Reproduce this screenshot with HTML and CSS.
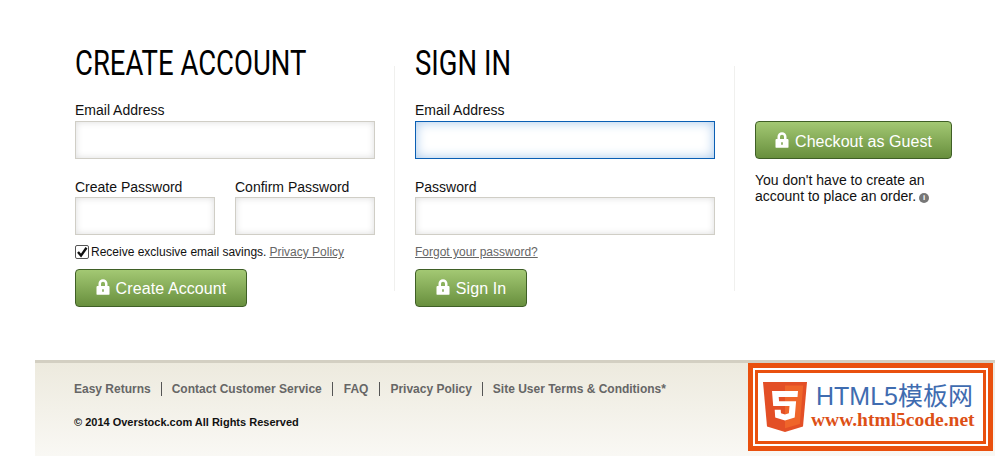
FILE: index.html
```html
<!DOCTYPE html>
<html>
<head>
    <meta charset="utf-8">
    <title>Sign In</title>
    <link rel="stylesheet" href="styles.css">
</head>
<body>
<div class="page">
    <div class="columns">
        <div class="col col-create">
            <h1><span>CREATE ACCOUNT</span></h1>
            <label class="label" for="new-email">Email Address</label>
            <input class="field" id="new-email" type="text">
            <div class="pair">
                <div class="pair-item">
                    <label class="label" for="new-pass">Create Password</label>
                    <input class="field" id="new-pass" type="password">
                </div>
                <div class="pair-item">
                    <label class="label" for="confirm-pass">Confirm Password</label>
                    <input class="field" id="confirm-pass" type="password">
                </div>
            </div>
            <div class="savings">
                <span class="check">
                    <svg viewBox="0 0 14 14" width="14" height="14"><path d="M3 7l3 3.6L11.5 2.8" fill="none" stroke="#111" stroke-width="2.4"/></svg>
                </span>
                <span>Receive exclusive email savings.</span>
                <a href="#" class="small-link">Privacy Policy</a>
            </div>
            <a href="#" class="btn btn-create">
                <svg class="lock" viewBox="0 0 14 16" width="14" height="16"><path fill="#fff" fill-rule="evenodd" d="M2.500 7V4.800a4.500 4.500 0 0 1 9 0V7h1.100c.5 0 .9.4.9.900v7c0 .5-.4.9-.9.9H1.400c-.5 0-.9-.4-.9-.9v-7c0-.5.4-.9.9-.9zM5 7h4V4.800a2 2 0 0 0-4 0zM6.200 10.200v2.600h1.600v-2.600z"/></svg>
                Create Account
            </a>
        </div>
        <div class="col col-signin">
            <h1><span>SIGN IN</span></h1>
            <label class="label" for="email">Email Address</label>
            <input class="field field-focus" id="email" type="text">
            <label class="label label-pass" for="pass">Password</label>
            <input class="field" id="pass" type="password">
            <a href="#" class="small-link forgot">Forgot your password?</a>
            <a href="#" class="btn btn-signin">
                <svg class="lock" viewBox="0 0 14 16" width="14" height="16"><path fill="#fff" fill-rule="evenodd" d="M2.500 7V4.800a4.500 4.500 0 0 1 9 0V7h1.100c.5 0 .9.4.9.900v7c0 .5-.4.9-.9.9H1.400c-.5 0-.9-.4-.9-.9v-7c0-.5.4-.9.9-.9zM5 7h4V4.800a2 2 0 0 0-4 0zM6.200 10.200v2.600h1.600v-2.600z"/></svg>
                Sign In
            </a>
        </div>
        <div class="col col-guest">
            <a href="#" class="btn btn-guest">
                <svg class="lock" viewBox="0 0 14 16" width="14" height="16"><path fill="#fff" fill-rule="evenodd" d="M2.500 7V4.800a4.500 4.500 0 0 1 9 0V7h1.100c.5 0 .9.4.9.900v7c0 .5-.4.9-.9.9H1.400c-.5 0-.9-.4-.9-.9v-7c0-.5.4-.9.9-.9zM5 7h4V4.800a2 2 0 0 0-4 0zM6.200 10.200v2.600h1.600v-2.600z"/></svg>
                Checkout as Guest
            </a>
            <p class="guest-note">You don't have to create an account to place an order. <span class="info">i</span></p>
        </div>
    </div>
    <div class="footer">
        <ul class="footer-links">
            <li><a href="#">Easy Returns</a></li>
            <li><a href="#">Contact Customer Service</a></li>
            <li><a href="#">FAQ</a></li>
            <li><a href="#">Privacy Policy</a></li>
            <li><a href="#">Site User Terms &amp; Conditions*</a></li>
        </ul>
        <p class="copyright">© 2014 Overstock.com All Rights Reserved</p>
    </div>
</div>
<div class="stamp">
    <div class="stamp-inner">
        <svg class="shield" viewBox="0 0 44 50" width="44" height="50">
            <path fill="#e34f26" d="M0 0h44l-4 44.500L22 50 4 44.500z"/>
            <path fill="#ef652a" d="M22 3.500h18.200L36.800 42 22 46.300z"/>
            <path fill="#fff" d="M35 9H9l1.200 15h16.300l-.6 7.300-3.900 1.200-4-1.200-.3-3.500h-6l.5 7.600 9.800 3 9.700-3 1.400-16.200H16.100l-.4-4.300H34.500z"/>
        </svg>
        <div class="stamp-text">
            <div class="stamp-title">HTML5模板网</div>
            <div class="stamp-url">www.html5code.net</div>
        </div>
    </div>
</div>
</body>
</html>
```

FILE: styles.css
```css
*{box-sizing:border-box;}
html,body{margin:0;padding:0;background:#fff;}
body{font-family:"Liberation Sans",Arial,sans-serif;color:#111;height:456px;overflow:hidden;position:relative;}
a{color:inherit;}
.page{width:960px;margin-left:35px;}
.columns{display:flex;padding-left:40px;height:360px;}
.col{height:225px;margin-top:66px;}
.col-create,.col-signin{border-right:1px solid #f0f0ee;margin-right:20px;width:320px;}
.col-guest{width:197px;padding-top:55px;}
h1{font-family:"Roboto",sans-serif;font-weight:400;font-size:35px;line-height:40px;margin:-22px 0 0;height:58px;color:#000;white-space:nowrap;}
h1 span{display:inline-block;transform:scaleX(.785);transform-origin:left center;}
.label{display:block;font-size:14px;line-height:16px;height:19px;margin-top:0;}
.field{display:block;width:300px;height:38px;border:1px solid #d0cec6;background:#fff;box-shadow:inset 0 0 7px #dcdcdc;outline:none;padding:0;margin:0;}
.field-focus{border-color:#0a5fb4;box-shadow:inset 0 0 12px #a4c6ea;}
.label-pass{margin-top:20px;height:18px;}
.pair{display:flex;gap:20px;margin-top:20px;}
.pair-item{width:140px;}
.pair-item .label{height:18px;}
.pair-item .field{width:140px;}
.savings{display:flex;align-items:center;font-size:12px;line-height:14px;margin-top:10px;height:14px;white-space:nowrap;}
.check{width:14px;height:14px;border:1px solid #555;border-radius:2px;margin-right:2px;display:block;background:#fff;}
.check svg{display:block;margin:-1px;}
.small-link{color:#666;font-size:12px;}
.savings .small-link{margin-left:3px;}
.forgot{display:block;margin-top:10px;line-height:14px;height:14px;}
.btn{display:flex;align-items:center;justify-content:center;height:38px;border:1px solid #3f5f26;border-radius:4px;background:linear-gradient(#a3c873,#688f3d);color:#fff;font-size:16px;letter-spacing:.1px;text-decoration:none;margin-top:10px;padding-top:2px;}
.btn .lock{margin:-4px 6px 0 0;}
.btn-create{width:172px;}
.btn-signin{width:112px;}
.btn-guest{width:197px;margin-top:0;padding-top:3px;letter-spacing:.05px;}
.guest-note{font-size:14px;line-height:16px;margin:13px 0 0;}
.info{display:inline-block;width:10px;height:10px;border-radius:50%;background:#777;color:#fff;font-size:8px;line-height:10px;text-align:center;font-weight:bold;margin-left:-1px;vertical-align:1px;}
.footer{height:96px;border-top:3px solid #d3cfc2;background:linear-gradient(#edeade,#f9f8f4);padding:19px 39px 0;}
.footer-links{list-style:none;display:flex;margin:0;padding:0;font-size:12px;font-weight:bold;color:#666;line-height:14px;}
.footer-links li{padding:0 10px;border-left:1px solid #555;}
.footer-links li:first-child{padding-left:0;border-left:0;}
.footer-links li:nth-child(3){padding:0 11px;}
.footer-links a{text-decoration:none;}
.copyright{font-size:11px;font-weight:bold;line-height:13px;margin:20px 0 0;color:#111;}
.stamp{position:absolute;left:748px;top:363px;width:245px;height:88px;background:#fff;border:5px solid #e9500e;padding:2px;}
.stamp-inner{border:3px solid #e9500e;height:100%;display:flex;align-items:center;padding-left:5px;gap:4px;}
.stamp-title{font-family:"Liberation Sans","Noto Sans CJK SC",sans-serif;font-size:25px;line-height:26px;color:#3f6cb0;white-space:nowrap;padding-left:5px;}
.stamp-url{font-family:"Liberation Serif",serif;font-weight:bold;font-size:19.500px;line-height:22px;color:#dd5016;white-space:nowrap;}
```
